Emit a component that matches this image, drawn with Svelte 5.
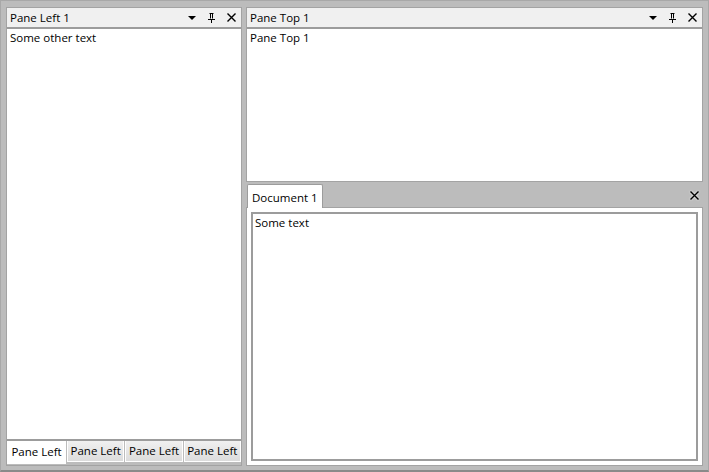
<script>
    const tabs = ["Pane Left", "Pane Left", "Pane Left", "Pane Left"];
</script>

{#snippet closeIcon()}
    <svg width="9" height="9" viewBox="0 0 9 9" fill="none" stroke="#000" stroke-width="1.4">
        <path d="M0.5 0.5 8.5 8.5M8.5 0.5 0.5 8.5" />
    </svg>
{/snippet}

{#snippet paneHeader(title)}
    <div class="pane-header">
        <span class="pane-title">{title}</span>
        <svg class="icon-menu" width="8" height="4" viewBox="0 0 8 4"><path d="M0 0H8L4 4Z" fill="#000" /></svg>
        <svg class="icon-pin" width="7" height="10" viewBox="0 0 7 10" fill="none" stroke="#000">
            <path d="M1.5 0.5H5.5M2.5 0.5V5.5M4.5 0.5V5.5" />
            <path d="M0 6.5H7M3.5 6.5V10" />
        </svg>
        <span class="icon-close">{@render closeIcon()}</span>
    </div>
{/snippet}

<div class="window">
    <div class="left-col pane">
        {@render paneHeader("Pane Left 1")}
        <div class="pane-body">Some other text</div>
        <div class="bottom-tabs">
            {#each tabs as tab, i}
                <div class="bottom-tab" class:active={i === 0}>{tab}</div>
            {/each}
        </div>
    </div>
    <div class="right-col">
        <div class="top-pane pane">
            {@render paneHeader("Pane Top 1")}
            <div class="pane-body">Pane Top 1</div>
        </div>
        <div class="doc-area">
            <div class="doc-tabs">
                <div class="doc-tab">Document 1</div>
                <span class="doc-close">{@render closeIcon()}</span>
            </div>
            <div class="doc-frame">
                <div class="doc-body">Some text</div>
            </div>
        </div>
    </div>
</div>

<style>
    :global(body) {
        margin: 0;
    }

    .window {
        box-sizing: border-box;
        width: 709px;
        height: 472px;
        display: flex;
        gap: 4px;
        padding: 6px 5px 4px;
        background: #bcbcbc;
        border-top: 1px solid #a8a8a8;
        border-left: 1px solid #a8a8a8;
        border-right: 1px solid #a8a8a8;
        border-bottom: 2px solid #8a8a8a;
        font-family: "Open Sans", sans-serif;
        font-size: 11.5px;
        color: #000;
    }

    .pane {
        box-sizing: border-box;
        display: flex;
        flex-direction: column;
        background: #fff;
        border: 1px solid #a3a3a3;
    }

    .left-col {
        width: 236px;
        flex: none;
    }

    .right-col {
        flex: 1;
        min-width: 0;
        display: flex;
        flex-direction: column;
        gap: 1px;
    }

    .top-pane {
        height: 175px;
        flex: none;
    }

    .pane-header {
        height: 19px;
        flex: none;
        display: flex;
        align-items: center;
        box-sizing: border-box;
        padding: 0 5px 0 3px;
        background: #f0f0f0;
    }

    .pane-title {
        flex: 1;
        line-height: 19px;
    }

    .icon-menu {
        margin-right: 12px;
    }

    .icon-pin {
        margin-right: 12px;
    }

    .icon-close {
        display: flex;
    }

    .pane-body {
        flex: 1;
        min-height: 0;
        background: #fff;
        border-top: 2px solid #9c9c9c;
        padding: 1px 3px;
        line-height: 16px;
    }

    .left-col .pane-body {
        border-bottom: 2px solid #9c9c9c;
    }

    .bottom-tabs {
        display: flex;
        gap: 1px;
        height: 24px;
        flex: none;
        background: #bcbcbc;
    }

    .bottom-tab {
        flex: 1;
        box-sizing: border-box;
        height: 21px;
        text-align: center;
        line-height: 19px;
        background: linear-gradient(#f0f0f0, #dcdcdc);
        border: 1px solid #fff;
        border-top: none;
    }

    .bottom-tab.active {
        flex: none;
        width: 59px;
        background: #fff;
        height: 23px;
        line-height: 21px;
        border: none;
    }

    .doc-area {
        flex: 1;
        min-height: 0;
        display: flex;
        flex-direction: column;
    }

    .doc-tabs {
        display: flex;
        align-items: flex-end;
        justify-content: space-between;
        height: 24px;
        flex: none;
    }

    .doc-tab {
        box-sizing: border-box;
        height: 24px;
        margin-left: 1px;
        margin-bottom: -1px;
        position: relative;
        padding: 3px 4px 0 4px;
        line-height: 20px;
        background: #fff;
        border: 1px solid #9c9c9c;
        border-bottom: none;
        border-radius: 2px 2px 0 0;
    }

    .doc-close {
        display: flex;
        margin: 0 4px 7px 0;
        filter: drop-shadow(0 0 1px #fff);
    }

    .doc-frame {
        flex: 1;
        min-height: 0;
        display: flex;
        background: #fff;
        border: 1px solid #a3a3a3;
        padding: 4px;
    }

    .doc-body {
        flex: 1;
        background: #fff;
        border: 2px solid #9c9c9c;
        padding: 1px 2px;
        line-height: 16px;
    }
</style>
